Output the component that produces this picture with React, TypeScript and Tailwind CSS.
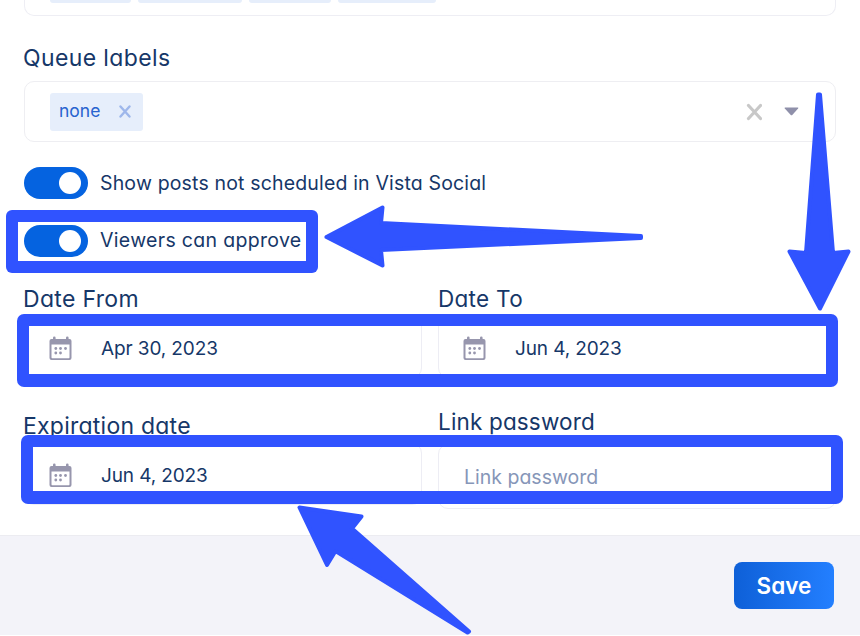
import type { ReactNode } from 'react';

function CalendarIcon() {
  return (
    <svg width="24" height="26" viewBox="0 0 24 26" className="mb-[2px] shrink-0" fill="#9796ad">
      <path d="M3 3H4V1.800a1.300 1.300 0 0 1 2.600 0V3H17V1.800a1.300 1.300 0 0 1 2.600 0V3H20.500a2 2 0 0 1 2 2V22A2 2 0 0 1 20.500 24H2.500A2 2 0 0 1 .500 22V5A2 2 0 0 1 2.500 3ZM2.500 8.500V21.500a.7.700 0 0 0 .7.700H19.800a.7.700 0 0 0 .7-.7V8.500Z" fillRule="evenodd" />
      <circle cx="6.800" cy="12.500" r="1.400" />
      <circle cx="11.500" cy="12.500" r="1.400" />
      <circle cx="16.500" cy="12.500" r="1.400" />
      <circle cx="6.800" cy="17" r="1.400" />
      <circle cx="11.500" cy="17" r="1.400" />
    </svg>
  );
}

function Toggle({ children }: { children: ReactNode }) {
  return (
    <div className="flex h-8 items-center gap-3">
      <span className="flex h-8 w-16 shrink-0 items-center justify-end rounded-full bg-[#0563e0] pr-[7px]">
        <span className="size-[22px] rounded-full bg-white" />
      </span>
      {children}
    </div>
  );
}

function DateField({ children }: { children: ReactNode }) {
  return (
    <div className="flex h-[62px] items-center gap-7 rounded-[10px] border border-[#ededf4] pt-[5px] pl-6 text-[19px] tracking-[-0.120px]">
      <CalendarIcon />
      {children}
    </div>
  );
}

export default function App() {
  return (
    <div className="relative h-[636px] w-[860px] overflow-hidden bg-white font-['Inter','Liberation_Sans',sans-serif] whitespace-nowrap text-[#163768] [font-feature-settings:'cv11']">
      <main className="flex h-[535px] flex-col pr-6 pl-6">
        <div className="flex h-4 shrink-0 gap-[7px] rounded-b-[10px] border border-t-0 border-[#eeeef4] pl-[25px]">
          <span className="h-[3px] w-[81px] rounded-b-sm bg-[#e6eefb]" />
          <span className="h-[3px] w-[104px] rounded-b-sm bg-[#e6eefb]" />
          <span className="h-[3px] w-[82px] rounded-b-sm bg-[#e6eefb]" />
          <span className="h-[3px] w-[98px] rounded-b-sm bg-[#e6eefb]" />
        </div>

        <h2 className="-ml-px mt-6 h-[35px] text-[23px] leading-[36px] tracking-[0.380px]">Queue labels</h2>
        <div className="mt-[6px] flex h-[61px] shrink-0 items-center justify-between rounded-[10px] border border-[#eeeef2] pr-9 pl-[25px]">
          <span className="flex h-[38px] w-[93px] items-center justify-between rounded-[3px] bg-[#e6eefb] pr-3 pl-[9px] text-[17.500px] text-[#2863cf]">
            <span>none</span>
            <svg width="12" height="13" viewBox="0 0 12 13" stroke="#9eb7eb" strokeWidth="2.400" strokeLinecap="round">
              <path d="M1.500 1.500 10.500 11.500M10.500 1.500 1.500 11.500" />
            </svg>
          </span>
          <span className="flex items-center gap-[22px]">
            <svg width="16" height="18" viewBox="0 0 16 18" stroke="#c8c8c8" strokeWidth="3.200" strokeLinecap="round">
              <path d="M2.500 2.500 14.500 15.500M14.500 2.500 2.500 15.500" />
            </svg>
            <svg width="15" height="9" viewBox="0 0 15 9" fill="#8f90aa">
              <path d="M1.300.5H13.700q1.200 0 .4 1L8.500 7.700q-1 1-2 0L.8 1.500q-.7-1 .5-1Z" />
            </svg>
          </span>
        </div>

        <div className="mt-[25px] flex flex-col gap-[26px] text-[19.500px]">
          <Toggle><span className="pt-px tracking-[0.165px]">Show posts not scheduled in Vista Social</span></Toggle>
          <Toggle><span className="tracking-[0.320px]">Viewers can approve</span></Toggle>
        </div>

        <div className="mt-[25px] grid shrink-0 grid-cols-[398px_398px] gap-4">
          <div>
            <h2 className="-ml-px h-[34px] text-[23px] leading-[34px] tracking-[0.330px]">Date From</h2>
            <DateField><span>Apr 30, 2023</span></DateField>
          </div>
          <div>
            <h2 className="h-[34px] text-[22.500px] leading-[34px] tracking-[0.300px]">Date To</h2>
            <DateField><span>Jun 4, 2023</span></DateField>
          </div>
        </div>

        <div className="mt-[27px] grid shrink-0 grid-cols-[398px_398px] gap-4">
          <div className="pt-1">
            <h2 className="-ml-px h-[34px] text-[23px] leading-[34px] tracking-[0.240px]">Expiration date</h2>
            <DateField><span>Jun 4, 2023</span></DateField>
          </div>
          <div>
            <h2 className="h-[34px] text-[22.500px] leading-[33px] tracking-[0.160px]">Link password</h2>
            <div className="mt-[5px] flex h-[65px] items-center rounded-[10px] border border-[#ededf4] pt-[3px] pl-[25px] text-[19.500px] text-[#8696b8]">
              <span>Link password</span>
            </div>
          </div>
        </div>
      </main>

      <footer className="flex h-[100px] items-start justify-end border-t border-[#ececf1] bg-[#f3f3f9] pt-[26px] pr-[26px]">
        <button className="h-[47px] w-[100px] rounded-[8px] bg-linear-to-r from-[#0e60d8] to-[#237fff] text-[22.500px] font-semibold text-white">
          <span>Save</span>
        </button>
      </footer>

      <div className="absolute top-[210px] left-[6px] h-[63px] w-[312px] rounded-[6px] bg-[#3053ff] [clip-path:polygon(evenodd,0_0,100%_0,100%_100%,0_100%,0_0,12px_12px,300px_12px,300px_51px,12px_51px,12px_12px)]" />
      <div className="absolute top-[314px] left-[17px] h-[73px] w-[821px] rounded-[7px] bg-[#3053ff] [clip-path:polygon(evenodd,0_0,100%_0,100%_100%,0_100%,0_0,12px_12px,809px_12px,809px_60px,12px_60px,12px_12px)]" />
      <div className="absolute top-[435px] left-[21px] h-[69px] w-[822px] rounded-[7px] bg-[#3053ff] [clip-path:polygon(evenodd,0_0,100%_0,100%_100%,0_100%,0_0,12px_12px,810px_12px,810px_56px,12px_56px,12px_12px)]" />

      <svg className="absolute inset-0" width="860" height="636" viewBox="0 0 860 636" fill="#3053ff" stroke="#3053ff" strokeWidth="4" strokeLinejoin="round">
        <path d="M326.500 237 382.500 207.500 381 223 641 236V238L381 250 382.500 265.500Z" />
        <path d="M818 94.500H820L833 253 848.500 251.500 820 308.500 789.500 251.500 806 253Z" />
        <path d="M299.500 507.500 361.500 516.500 352 528.500 469 631.500 467.500 632.500 335.500 551 327 565Z" />
      </svg>
    </div>
  );
}
